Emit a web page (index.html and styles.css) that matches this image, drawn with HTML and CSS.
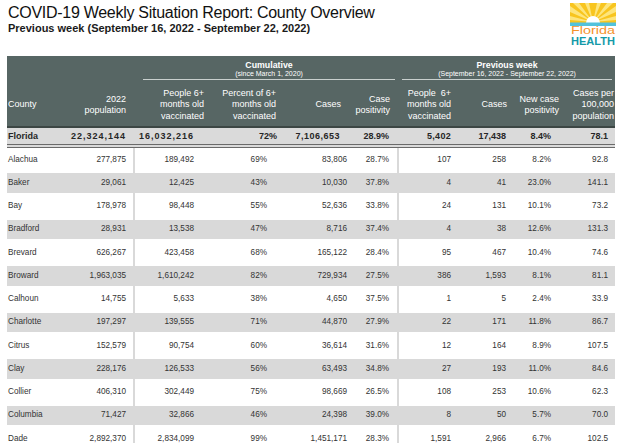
FILE: index.html
```html
<!DOCTYPE html>
<html lang="en">
<head>
<meta charset="utf-8">
<title>COVID-19 Weekly Situation Report: County Overview</title>
<link rel="stylesheet" href="styles.css">
</head>
<body>
<div class="page">
  <header class="top">
    <div class="titles">
      <h1 class="title">COVID-19 Weekly Situation Report: County Overview</h1>
      <p class="subtitle">Previous week (September 16, 2022 - September 22, 2022)</p>
    </div>
    <svg class="logo" viewBox="0 0 46 42" width="46" height="42" aria-label="Florida Health">
      <rect x="0" y="0" width="46" height="20" fill="#f8c51e"/>
      <g fill="#fde57c">
        <polygon points="23,19 0,3 0,9"/>
        <polygon points="23,19 0,13 0,17"/>
        <polygon points="23,19 3,0 9,0"/>
        <polygon points="23,19 15,0 19,0"/>
        <polygon points="23,19 27,0 31,0"/>
        <polygon points="23,19 37,0 43,0"/>
        <polygon points="23,19 46,3 46,9"/>
        <polygon points="23,19 46,13 46,17"/>
      </g>
      <path d="M16,20 A7,7 0 0 1 30,20 Z" fill="#ffffff"/>
      <rect x="0" y="19.5" width="46" height="3.5" fill="#52c2dc"/>
      <rect x="0" y="23" width="46" height="19" fill="#ffffff"/>
      <text class="logo-florida" x="1" y="30.5" textLength="44" lengthAdjust="spacingAndGlyphs">Florida</text>
      <text class="logo-health" x="1" y="41.5" textLength="44" lengthAdjust="spacingAndGlyphs">HEALTH</text>
    </svg>
  </header>

  <table class="report">
    <colgroup>
      <col class="w63"><col class="w63"><col class="w77"><col class="w73"><col class="w69">
      <col class="w45"><col class="w63"><col class="w53"><col class="w50"><col class="w52">
    </colgroup>
    <thead>
      <tr class="group-row">
        <th></th>
        <th></th>
        <th colspan="4" class="group">
          <div class="group-box group-cum">
            <div class="group-title">Cumulative</div>
            <div class="group-sub">(since March 1, 2020)</div>
          </div>
        </th>
        <th colspan="4" class="group">
          <div class="group-box group-prev">
            <div class="group-title">Previous week</div>
            <div class="group-sub">(September 16, 2022 - September 22, 2022)</div>
          </div>
        </th>
      </tr>
      <tr class="head-row">
        <th class="county">County</th>
        <th>2022<br>population</th>
        <th>People 6+<br>months old<br>vaccinated</th>
        <th>Percent of 6+<br>months old<br>vaccinated</th>
        <th>Cases</th>
        <th>Case<br>positivity</th>
        <th>People&nbsp; 6+<br>months old<br>vaccinated</th>
        <th>Cases</th>
        <th>New case<br>positivity</th>
        <th>Cases per<br>100,000<br>population</th>
      </tr>
    </thead>
    <tbody>
      <tr class="state">
        <td>Florida</td><td>22,324,144</td><td>16,032,216</td><td>72%</td><td>7,106,653</td><td>28.9%</td><td>5,402</td><td>17,438</td><td>8.4%</td><td>78.1</td>
      </tr>
      <tr><td>Alachua</td><td>277,875</td><td>189,492</td><td>69%</td><td>83,806</td><td>28.7%</td><td>107</td><td>258</td><td>8.2%</td><td>92.8</td></tr>
      <tr class="alt"><td>Baker</td><td>29,061</td><td>12,425</td><td>43%</td><td>10,030</td><td>37.8%</td><td>4</td><td>41</td><td>23.0%</td><td>141.1</td></tr>
      <tr><td>Bay</td><td>178,978</td><td>98,448</td><td>55%</td><td>52,636</td><td>33.8%</td><td>24</td><td>131</td><td>10.1%</td><td>73.2</td></tr>
      <tr class="alt"><td>Bradford</td><td>28,931</td><td>13,538</td><td>47%</td><td>8,716</td><td>37.4%</td><td>4</td><td>38</td><td>12.6%</td><td>131.3</td></tr>
      <tr><td>Brevard</td><td>626,267</td><td>423,458</td><td>68%</td><td>165,122</td><td>28.4%</td><td>95</td><td>467</td><td>10.4%</td><td>74.6</td></tr>
      <tr class="alt"><td>Broward</td><td>1,963,035</td><td>1,610,242</td><td>82%</td><td>729,934</td><td>27.5%</td><td>386</td><td>1,593</td><td>8.1%</td><td>81.1</td></tr>
      <tr><td>Calhoun</td><td>14,755</td><td>5,633</td><td>38%</td><td>4,650</td><td>37.5%</td><td>1</td><td>5</td><td>2.4%</td><td>33.9</td></tr>
      <tr class="alt"><td>Charlotte</td><td>197,297</td><td>139,555</td><td>71%</td><td>44,870</td><td>27.9%</td><td>22</td><td>171</td><td>11.8%</td><td>86.7</td></tr>
      <tr><td>Citrus</td><td>152,579</td><td>90,754</td><td>60%</td><td>36,614</td><td>31.6%</td><td>12</td><td>164</td><td>8.9%</td><td>107.5</td></tr>
      <tr class="alt"><td>Clay</td><td>228,176</td><td>126,533</td><td>56%</td><td>63,493</td><td>34.8%</td><td>27</td><td>193</td><td>11.0%</td><td>84.6</td></tr>
      <tr><td>Collier</td><td>406,310</td><td>302,449</td><td>75%</td><td>98,669</td><td>26.5%</td><td>108</td><td>253</td><td>10.6%</td><td>62.3</td></tr>
      <tr class="alt"><td>Columbia</td><td>71,427</td><td>32,866</td><td>46%</td><td>24,398</td><td>39.0%</td><td>8</td><td>50</td><td>5.7%</td><td>70.0</td></tr>
      <tr><td>Dade</td><td>2,892,370</td><td>2,834,099</td><td>99%</td><td>1,451,171</td><td>28.3%</td><td>1,591</td><td>2,966</td><td>6.7%</td><td>102.5</td></tr>
    </tbody>
  </table>
</div>
</body>
</html>
```

FILE: styles.css
```css
html, body {
  margin: 0;
  padding: 0;
  background: #ffffff;
}

body {
  font-family: "Liberation Sans", Arial, sans-serif;
  color: #333333;
  overflow: hidden;
}

.page {
  padding: 0 9px 0 7px;
}

.top {
  display: flex;
  justify-content: space-between;
  align-items: flex-start;
  height: 56px;
}

.titles {
  padding-left: 1px;
}

.title {
  margin: 3px 0 0;
  font-size: 16px;
  line-height: 19px;
  font-weight: 400;
  letter-spacing: -0.28px;
  color: #111111;
}

.subtitle {
  margin: 0;
  font-size: 11px;
  line-height: 13px;
  font-weight: 700;
  color: #1a1a1a;
}

.logo {
  display: block;
  margin-top: 3px;
  margin-right: -1px;
}

.logo-florida {
  font-family: "Liberation Sans", Arial, sans-serif;
  font-size: 10px;
  fill: #f5922c;
}

.logo-health {
  font-family: "Liberation Sans", Arial, sans-serif;
  font-size: 10.5px;
  font-weight: 700;
  fill: #149aa8;
}

/* ---------- table ---------- */
.report {
  width: 608px;
  table-layout: fixed;
  border-collapse: separate;
  border-spacing: 0;
  font-size: 8.2px;
}

.w63 { width: 63px; }
.w77 { width: 77px; }
.w73 { width: 73px; }
.w69 { width: 69px; }
.w45 { width: 45px; }
.w53 { width: 53px; }
.w50 { width: 50px; }
.w52 { width: 52px; }

.report thead th {
  background: #576664;
  color: #ffffff;
  font-weight: 400;
  font-size: 9px;
  line-height: 11.5px;
  text-align: right;
  vertical-align: middle;
  padding: 0;
  white-space: nowrap;
}

.group-row th {
  height: 28px;
  vertical-align: bottom;
}

.group {
  text-align: center;
}

.group-box {
  border-bottom: 1.5px solid #c9d0ce;
  padding-bottom: 1px;
  margin-bottom: 1px;
  text-align: center;
}

.group-cum {
  margin-left: 10px;
  margin-right: 2px;
}

.group-prev {
  margin-left: 5px;
  margin-right: 3px;
}

.group-title {
  font-size: 8.8px;
  line-height: 10px;
  font-weight: 700;
}

.group-sub {
  font-size: 7px;
  line-height: 8px;
}

.head-row th {
  height: 42px;
  border-bottom: 2px solid #3c4644;
}

.head-row th.county {
  text-align: left;
  padding-left: 1px;
}

.head-row th:nth-child(2) { padding-right: 7px; }
.head-row th:nth-child(3) { padding-right: 6px; }
.head-row th:nth-child(4) { padding-right: 7px; }
.head-row th:nth-child(5) { padding-right: 11px; }
.head-row th:nth-child(6) { padding-right: 7px; }
.head-row th:nth-child(7) { padding-right: 9px; }
.head-row th:nth-child(8) { padding-right: 6px; }
.head-row th:nth-child(9) { padding-right: 4px; }
.head-row th:nth-child(10) { padding-right: 1px; }

.report tbody td {
  height: 23.25px;
  padding: 0;
  text-align: right;
  vertical-align: middle;
  white-space: nowrap;
  line-height: 10px;
  box-sizing: border-box;
}

.report tbody td:nth-child(1) { text-align: left; padding-left: 1px; }
.report tbody td:nth-child(2) { padding-right: 7px; }
.report tbody td:nth-child(3) { padding-right: 16px; border-left: 2px solid #d9d9d9; }
.report tbody td:nth-child(4) { padding-right: 16px; }
.report tbody td:nth-child(5) { padding-right: 5px; }
.report tbody td:nth-child(6) { padding-right: 8px; }
.report tbody td:nth-child(7) { padding-right: 9px; border-left: 2px solid #d9d9d9; }
.report tbody td:nth-child(8) { padding-right: 7px; }
.report tbody td:nth-child(9) { padding-right: 12px; }
.report tbody td:nth-child(10) { padding-right: 7px; }

.report tbody tr.alt td {
  background: #d9d9d9;
  box-shadow: inset 0 2px 0 #ffffff, inset 0 -2px 0 #ffffff;
}

.report tbody tr.state td {
  height: 20px;
  background: #dadada;
  font-weight: 700;
  font-size: 9px;
  color: #262626;
  border-bottom: 4px double #6a6a6a;
  border-left: 0;
}

.report tbody tr.state td:nth-child(2),
.report tbody tr.state td:nth-child(3) {
  letter-spacing: 1px;
}

.report tbody tr.state td:nth-child(4) { padding-right: 6px; }
.report tbody tr.state td:nth-child(5) { padding-right: 12px; letter-spacing: 0.5px; }
.report tbody tr.state td:nth-child(7) { letter-spacing: 0.3px; }
```
